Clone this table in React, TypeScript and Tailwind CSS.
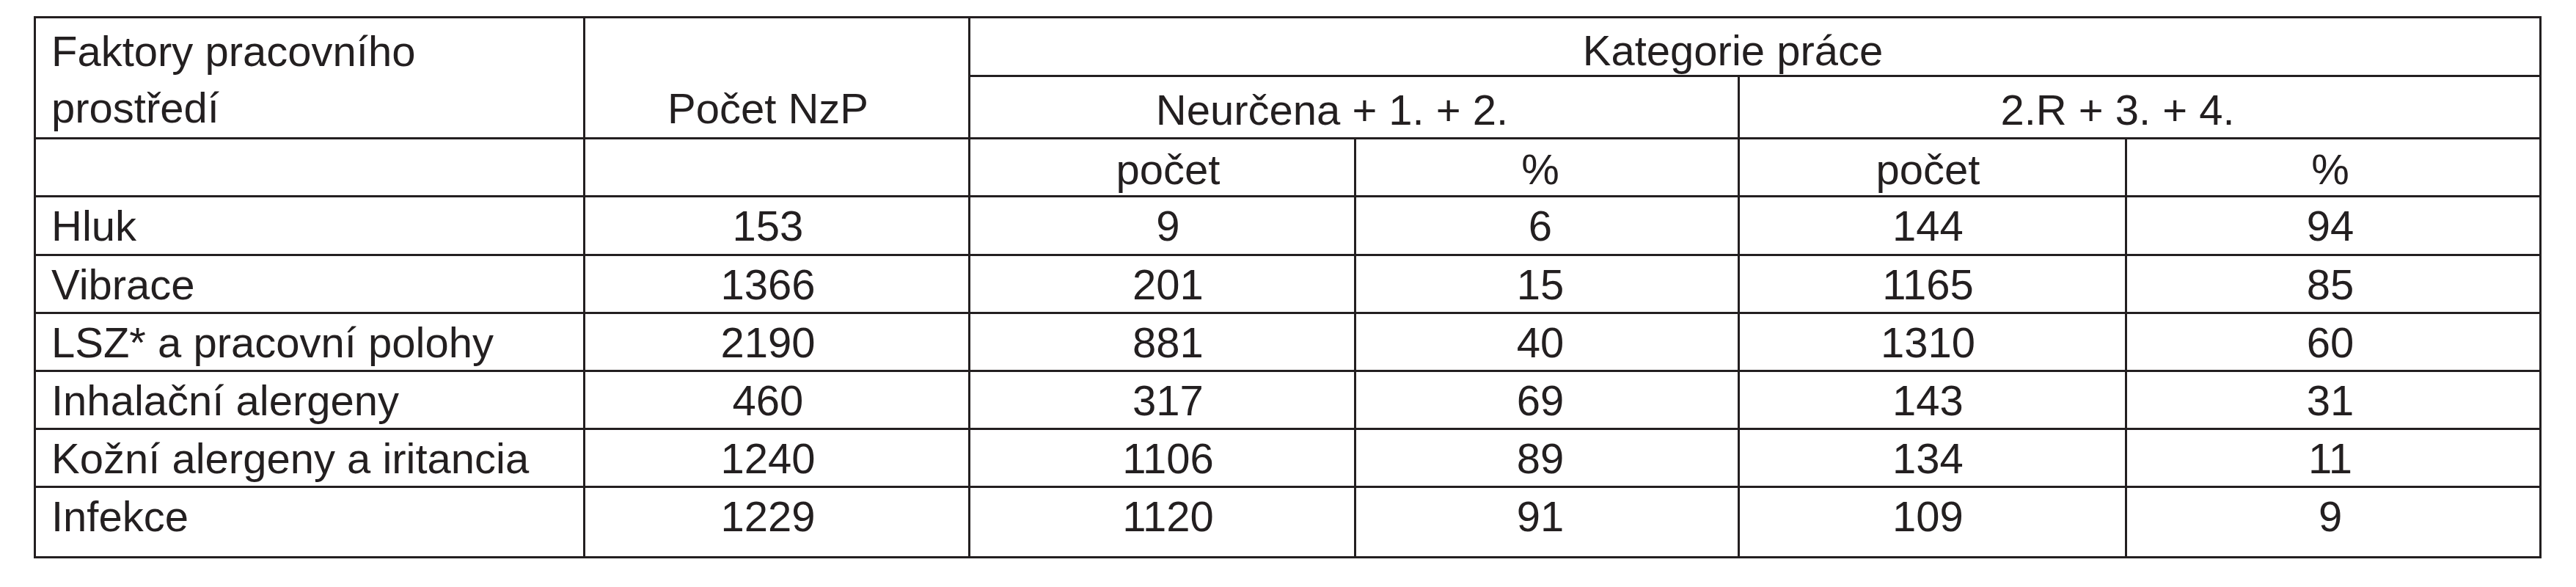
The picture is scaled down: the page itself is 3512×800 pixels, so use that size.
import React from "react"

type Row = {
  label: string
  total: string
  lowCount: string
  lowPct: string
  highCount: string
  highPct: string
}

const rows: Row[] = [
  { label: "Hluk", total: "153", lowCount: "9", lowPct: "6", highCount: "144", highPct: "94" },
  { label: "Vibrace", total: "1366", lowCount: "201", lowPct: "15", highCount: "1165", highPct: "85" },
  { label: "LSZ* a pracovní polohy", total: "2190", lowCount: "881", lowPct: "40", highCount: "1310", highPct: "60" },
  { label: "Inhalační alergeny", total: "460", lowCount: "317", lowPct: "69", highCount: "143", highPct: "31" },
  { label: "Kožní alergeny a iritancia", total: "1240", lowCount: "1106", lowPct: "89", highCount: "134", highPct: "11" },
  { label: "Infekce", total: "1229", lowCount: "1120", lowPct: "91", highCount: "109", highPct: "9" },
]

const cell = "border-[3px] border-[#231f20] p-0"
const num = `${cell} text-center align-top pt-[6px]`

const App = () => {
  return (
    <div
      className="w-[3512px] h-[800px] bg-white pt-[22px] pl-[46px] text-[#231f20] text-[58px] leading-[66px]"
      style={{ fontFamily: '"Liberation Sans", Arial, sans-serif' }}
    >
      <table className="w-[3416px] table-fixed border-collapse">
        <colgroup>
          <col className="w-[749px]" />
          <col className="w-[525px]" />
          <col className="w-[526px]" />
          <col className="w-[523px]" />
          <col className="w-[528px]" />
          <col className="w-[565px]" />
        </colgroup>
        <tbody>
          <tr className="h-[78px]">
            <td rowSpan={2} className={`${cell} align-top pl-[21px] pt-[6px] leading-[77px]`}>
              Faktory pracovního
              <br />
              prostředí
            </td>
            <td rowSpan={2} className={`${cell} align-bottom text-center pb-[6px] pr-[24px]`}>
              Počet NzP
            </td>
            <td colSpan={4} className={`${cell} align-top text-center pt-[11px] pr-[60px]`}>
              Kategorie práce
            </td>
          </tr>
          <tr className="h-[85px]">
            <td colSpan={2} className={`${cell} align-bottom text-center pb-[4px] pr-[60px]`}>
              Neurčena + 1. + 2.
            </td>
            <td colSpan={2} className={`${cell} align-bottom text-center pb-[4px] pr-[60px]`}>
              2.R + 3. + 4.
            </td>
          </tr>
          <tr className="h-[79px]">
            <td className={cell}></td>
            <td className={cell}></td>
            <td className={`${num} pt-[8px] pl-[16px]`}>počet</td>
            <td className={`${num} pt-[8px] pr-[18px]`}>%</td>
            <td className={`${num} pt-[8px] pr-[12px]`}>počet</td>
            <td className={`${num} pt-[8px] pr-[8px]`}>%</td>
          </tr>
          {rows.map((r, i) => (
            <tr key={r.label} className={i === rows.length - 1 ? "h-[96px]" : i === 0 ? "h-[80px]" : "h-[79px]"}>
              <td className={`${cell} align-top pl-[21px] pt-[6px]`}>{r.label}</td>
              <td className={`${num} pr-[24px]`}>{r.total}</td>
              <td className={`${num} pl-[16px]`}>{r.lowCount}</td>
              <td className={`${num} pr-[18px]`}>{r.lowPct}</td>
              <td className={`${num} pr-[12px]`}>{r.highCount}</td>
              <td className={`${num} pr-[8px]`}>{r.highPct}</td>
            </tr>
          ))}
        </tbody>
      </table>
    </div>
  )
}

export default App
